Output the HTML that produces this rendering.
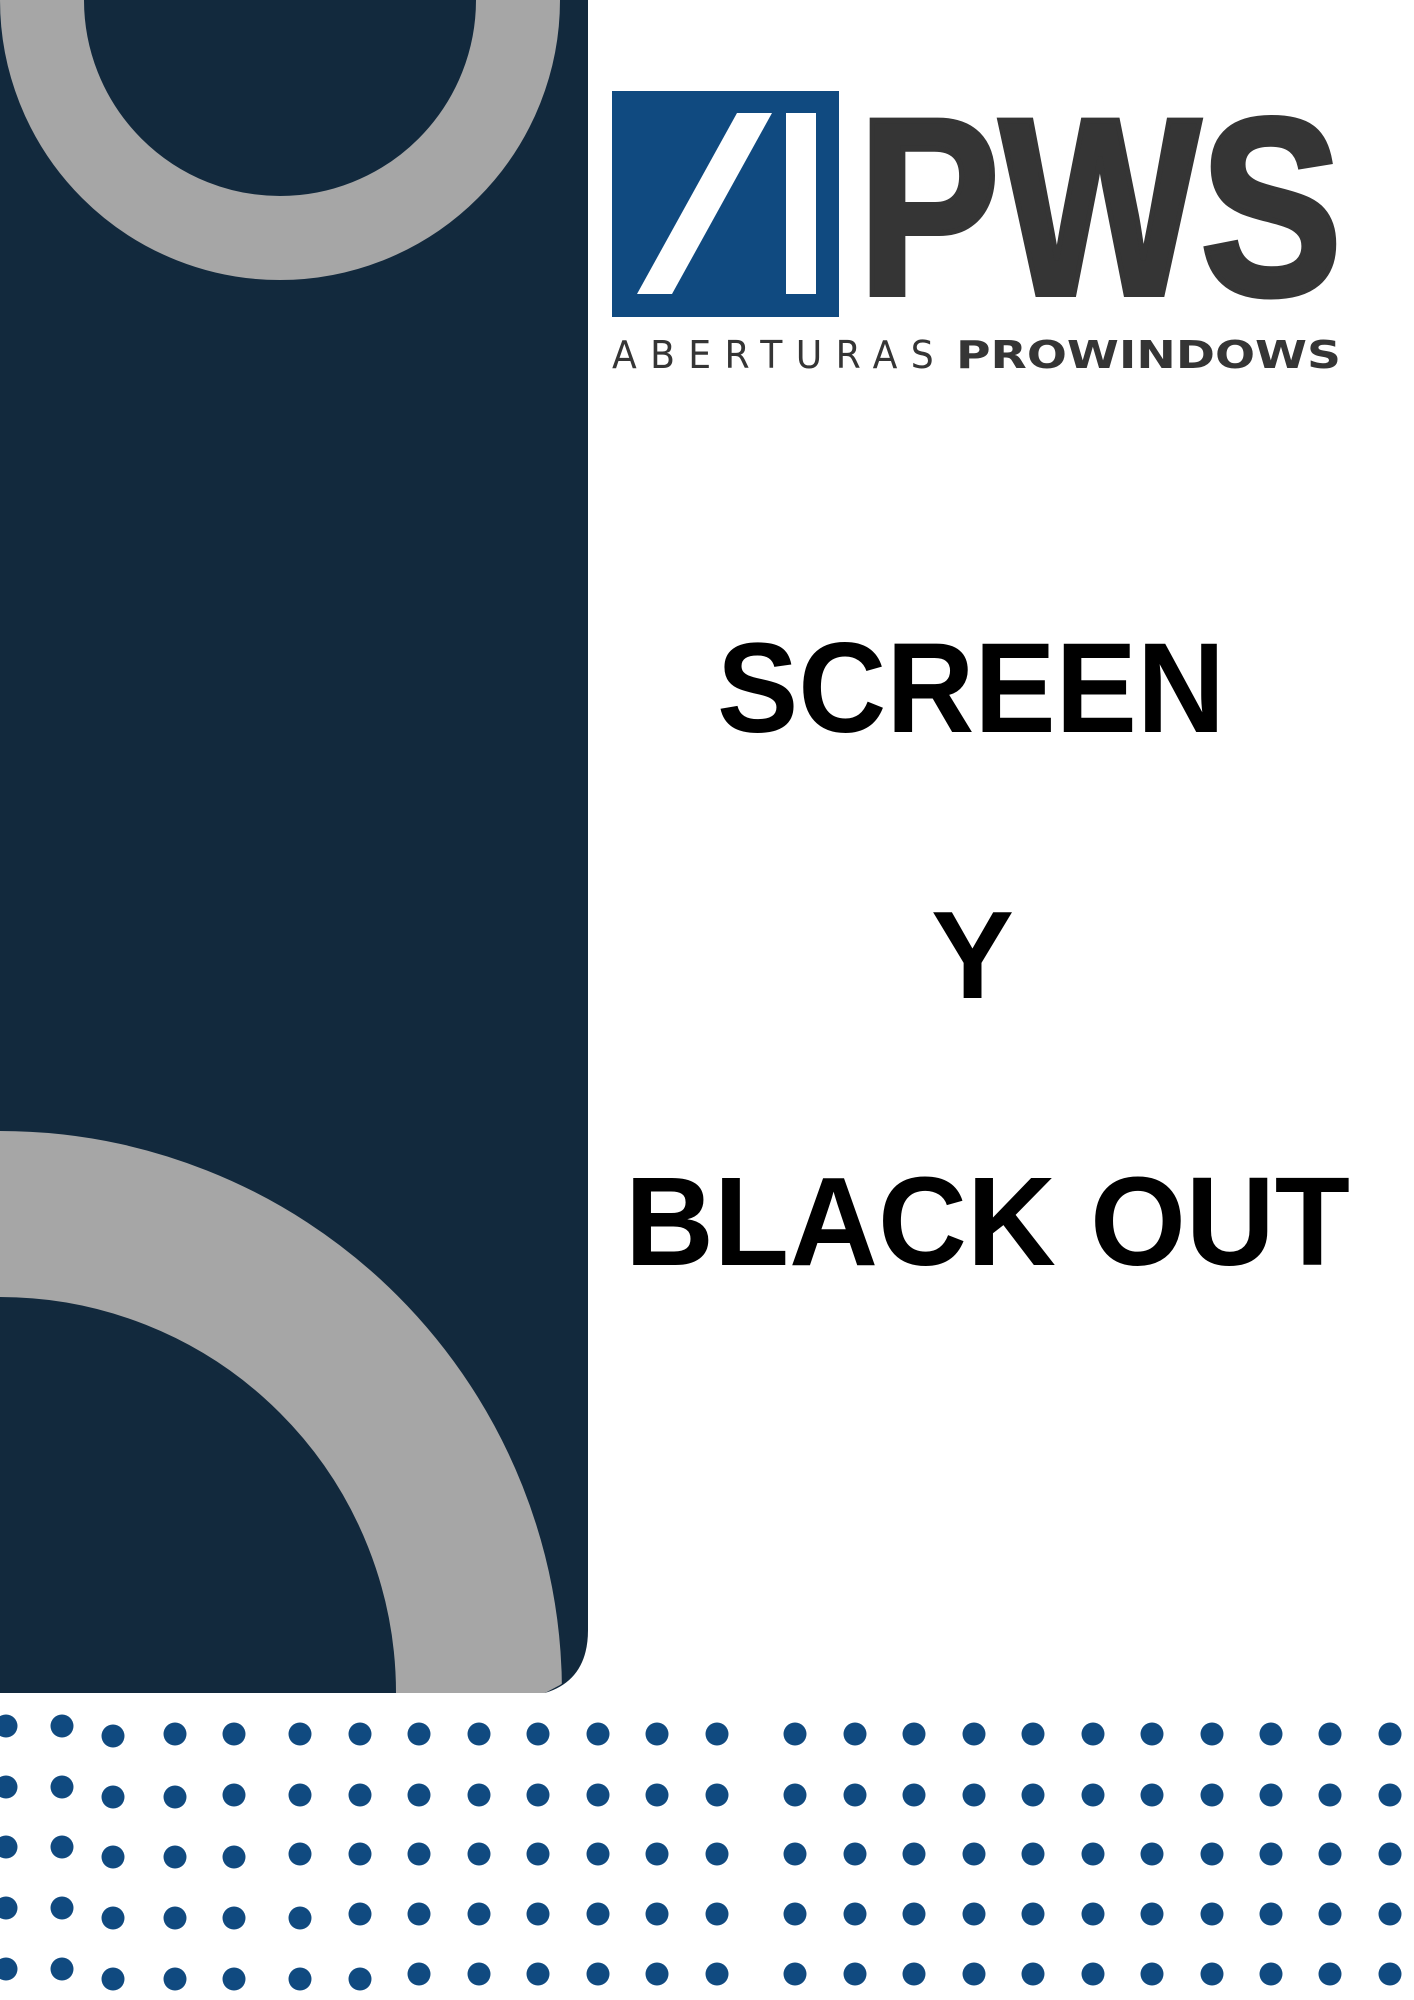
<!DOCTYPE html>
<html><head><meta charset="utf-8"><style>html,body{margin:0;padding:0;background:#fff;overflow:hidden;width:1414px;height:2000px}svg{display:block}</style></head><body>
<svg width="1414" height="2000" viewBox="0 0 1414 2000" xmlns="http://www.w3.org/2000/svg">
<defs><clipPath id="panel"><path d="M0 0H588V1630A62 62 0 0 1 560 1685L545 1693H0Z"/></clipPath></defs>
<path d="M0 0H588V1630Q588 1680 545 1693H0Z" fill="#12293d"/>
<g clip-path="url(#panel)">
<circle cx="280" cy="0" r="238" fill="none" stroke="#a6a6a6" stroke-width="84"/>
<circle cx="0" cy="1693" r="479" fill="none" stroke="#a6a6a6" stroke-width="166"/>
</g>
<rect x="612" y="91" width="227" height="226" fill="#104a80"/>
<polygon points="637,294 672,294 772,113 737,113" fill="#fff"/>
<rect x="786" y="113" width="30" height="181" fill="#fff"/>
<text x="858" y="294" font-family="Liberation Sans,sans-serif" font-weight="bold" font-size="252" fill="#353535" stroke="#353535" stroke-width="6" textLength="484" lengthAdjust="spacingAndGlyphs">PWS</text>
<text x="612" y="368" font-family="DejaVu Sans,sans-serif" font-size="38" fill="#353535" textLength="335" lengthAdjust="spacingAndGlyphs" letter-spacing="14">ABERTURAS</text>
<text x="956" y="368" font-family="DejaVu Sans,sans-serif" font-weight="bold" font-size="38" fill="#353535" textLength="385" lengthAdjust="spacingAndGlyphs">PROWINDOWS</text>
<g font-family="Liberation Sans,sans-serif" font-weight="bold" fill="#000">
<text x="717" y="732" font-size="128" textLength="508" lengthAdjust="spacingAndGlyphs">SCREEN</text>
<text x="931" y="998" font-size="124" textLength="83" lengthAdjust="spacingAndGlyphs">Y</text>
<text x="625" y="1265" font-size="126" textLength="725" lengthAdjust="spacingAndGlyphs">BLACK OUT</text>
</g>
<g fill="#104a80" id="dots"></g>
</svg>
<script>
var xs=[6,62,113,175,234,300,360,419,479,538,598,657,717,795,855,914,974,1033,1093,1152,1212,1271,1330,1390];
var ys=[1726,1787,1847,1908,1969],offs=[8,8,7,6,5];
var g=document.getElementById('dots'),h='';
for(var r=0;r<5;r++)for(var c=0;c<xs.length;c++){var y=ys[r];if(c>=2){y+=(c<=r+2?10:offs[r]);}
h+='<circle cx="'+xs[c]+'" cy="'+y+'" r="11.5"/>';}
g.innerHTML=h;
</script>
</body></html>
